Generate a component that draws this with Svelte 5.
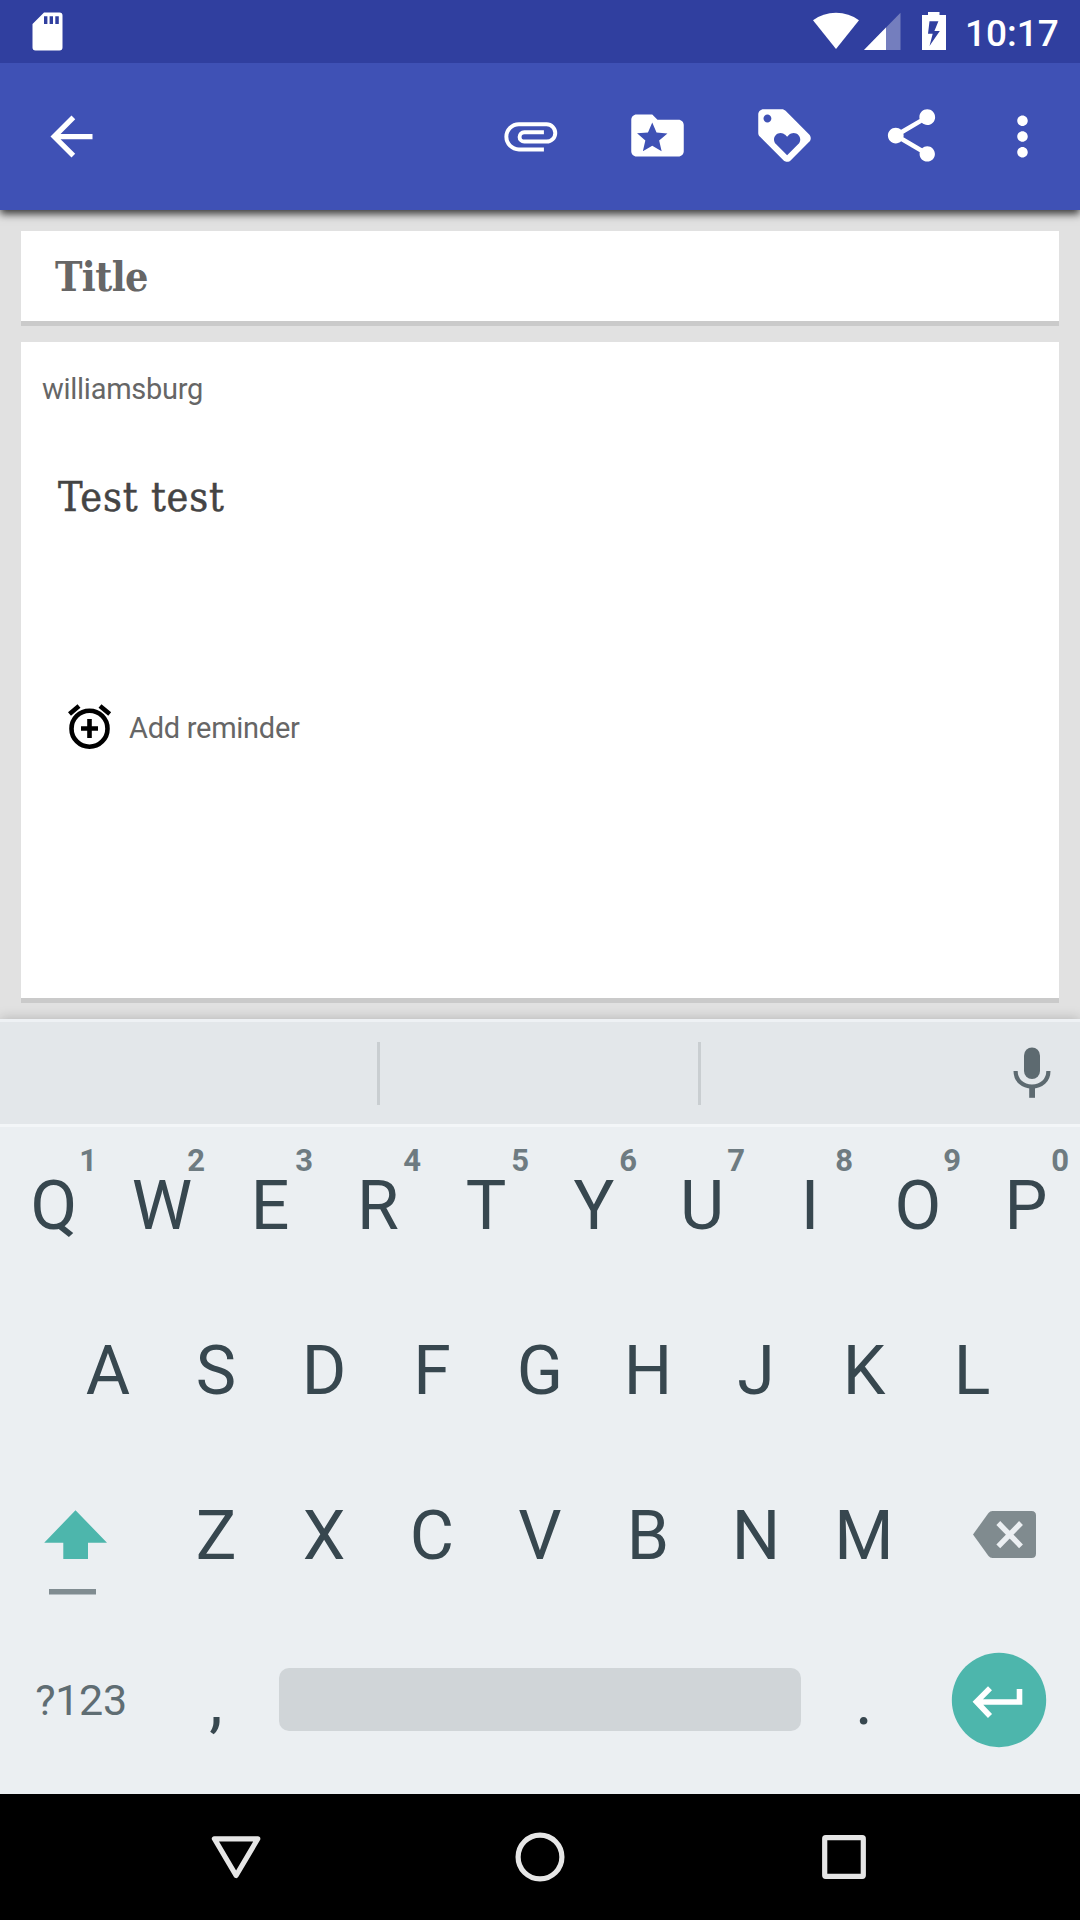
<script>
  const topRow = [...'QWERTYUIOP'].map((letter, i) => ({ letter, hint: (i + 1) % 10 }));
  const homeRow = [...'ASDFGHJKL'];
  const bottomRow = [...'ZXCVBNM'];

  const actions = [
    {
      name: 'Category',
      d: 'M20 6h-8l-2-2H4c-1.1 0-1.99.9-1.99 2L2 18c0 1.1.9 2 2 2h16c1.1 0 2-.9 2-2V8c0-1.1-.9-2-2-2zm-6.42 12L10 15.9 6.42 18l.95-4.07-3.16-2.74 4.16-.36L10 7l1.63 3.84 4.16.36-3.16 2.74.95 4.06z'
    },
    {
      name: 'Tag',
      d: 'M21.41 11.58l-9-9C12.05 2.22 11.55 2 11 2H4c-1.1 0-2 .9-2 2v7c0 .55.22 1.05.59 1.42l9 9c.36.36.86.58 1.41.58.55 0 1.05-.22 1.41-.59l7-7c.37-.36.59-.86.59-1.41 0-.55-.23-1.06-.59-1.42zM5.5 7C4.67 7 4 6.33 4 5.5S4.67 4 5.5 4 7 4.67 7 5.5 6.33 7 5.5 7zm11.77 8.27L13 19.54l-4.27-4.27C8.28 14.81 8 14.19 8 13.5c0-1.38 1.12-2.5 2.5-2.5.69 0 1.32.28 1.77.74l.73.72.73-.73c.45-.45 1.08-.73 1.77-.73 1.38 0 2.5 1.12 2.5 2.5 0 .69-.28 1.32-.73 1.77z'
    },
    {
      name: 'Share',
      d: 'M18 16.08c-.76 0-1.44.3-1.96.77L8.91 12.7c.05-.23.09-.46.09-.7s-.04-.47-.09-.7l7.05-4.11c.54.5 1.25.81 2.04.81 1.66 0 3-1.34 3-3s-1.34-3-3-3-3 1.34-3 3c0 .24.04.47.09.7L8.04 9.81C7.5 9.31 6.79 9 6 9c-1.66 0-3 1.34-3 3s1.34 3 3 3c.79 0 1.5-.31 2.04-.81l7.12 4.16c-.05.21-.08.43-.08.65 0 1.61 1.31 2.92 2.92 2.92 1.61 0 2.92-1.31 2.92-2.92s-1.31-2.92-2.92-2.92z'
    }
  ];
</script>

<div class="screen">
  <header class="status">
    <svg class="sd" width="32" height="40" viewBox="0 0 32 40">
      <path fill="#fff" fill-rule="evenodd" d="M12 1.500H27.500a3 3 0 0 1 3 3V36.500a3 3 0 0 1-3 3H3.500a3 3 0 0 1-3-3V13zM12 5.300v7.700h3.400V5.300zM17.600 5.300v7.700h3.400V5.300zM23.300 5.300v7.700h3.500V5.300z" />
    </svg>
    <svg class="indicators" width="136" height="40" viewBox="0 0 136 40">
      <path fill="#fff" d="M0 9.300Q10 1.800 23 1.800T46 9.300L23 38z" />
      <path fill="#fff" fill-opacity=".33" d="M87.500 1.800V39H51z" />
      <path fill="#fff" d="M73 16.500V39H51z" />
      <path fill="#fff" fill-rule="evenodd" d="M115 1h11.500v3H133v35h-24V4h6zM116.500 10.300l-1.500 12.500h4.700L116.500 35 126.800 20h-5.400l4-9.700z" />
    </svg>
    <span class="clock">10:17</span>
  </header>

  <nav class="toolbar">
    <svg class="icon back" viewBox="0 0 24 24"><path d="M20 11H7.83l5.59-5.59L12 4l-8 8 8 8 1.41-1.41L7.83 13H20v-2z" /></svg>
    <div class="actions">
      <svg class="icon outline" viewBox="0 0 24 24" aria-label="Attach">
        <path d="M17.110 17.300H7.590A4.795 4.795 0 0 1 7.590 7.710H18.130A3.305 3.305 0 0 1 18.130 14.320H9.620A1.780 1.780 0 0 1 9.620 10.760H17.110" />
      </svg>
      {#each actions as action}
        <svg class="icon" viewBox="0 0 24 24" aria-label={action.name}><path d={action.d} /></svg>
      {/each}
    </div>
    <svg class="icon more" viewBox="0 0 24 24"><path d="M12 8c1.1 0 2-.9 2-2s-.9-2-2-2-2 .9-2 2 .9 2 2 2zm0 2c-1.1 0-2 .9-2 2s.9 2 2 2 2-.9 2-2-.9-2-2-2zm0 6c-1.1 0-2 .9-2 2s.9 2 2 2 2-.9 2-2-.9-2-2-2z" /></svg>
  </nav>

  <main class="note">
    <section class="card title">Title</section>
    <section class="card body">
      <div class="category">williamsburg</div>
      <div class="content">Test test</div>
      <div class="reminder">
        <svg width="46" height="48" viewBox="0 0 46 48" fill="none" stroke="#000" stroke-width="4.6">
          <circle cx="22.500" cy="25.700" r="18" />
          <path d="M22.500 16V35M14 25.500H31M2.500 11L12 3M33 3L42.700 11" />
        </svg>
        <span>Add reminder</span>
      </div>
    </section>
  </main>

  <section class="keyboard">
    <div class="suggestions">
      <i></i>
      <i></i>
      <svg width="38" height="52" viewBox="0 0 38 52">
        <rect x="11" y="0.5" width="16" height="31.500" rx="8" fill="#5d6a70" />
        <path d="M2.600 24c0 9.500 7 15.500 16.400 15.500S35.400 33.500 35.400 24" fill="none" stroke="#5d6a70" stroke-width="4.200" />
        <path d="M16.200 40h5.800v10.800h-5.800z" fill="#5d6a70" />
      </svg>
    </div>
    <div class="keys">
      <div class="row">
        {#each topRow as key}
          <div class="key">{key.letter}<small>{key.hint}</small></div>
        {/each}
      </div>
      <div class="row">
        {#each homeRow as letter}<div class="key">{letter}</div>{/each}
      </div>
      <div class="row">
        <svg class="wide" viewBox="0 0 162 165">
          <path fill="#4db6ac" d="M75.500 53.200L107 85.800H88V102H63.300V85.800H44.200z" />
          <path fill="#808c91" d="M49 132h47v5.600H49z" />
        </svg>
        {#each bottomRow as letter}<div class="key">{letter}</div>{/each}
        <svg class="wide" viewBox="0 0 162 165">
          <path fill="#808b8f" d="M55 77.500L70.500 56Q72 54 74.500 54H113.500q4.500 0 4.500 4.500V96.500q0 4.500-4.500 4.500H74.500Q72 101 70.500 99z" />
          <path stroke="#ebeff2" stroke-width="5.400" d="M80.300 66L103 89.300M103 66L80.300 89.300" />
        </svg>
      </div>
      <div class="row">
        <div class="key wide symbols">?123</div>
        <div class="key">,</div>
        <div class="space"></div>
        <div class="key">.</div>
        <svg class="wide" viewBox="0 0 162 165">
          <circle cx="81" cy="78" r="47.200" fill="#4db6ac" />
          <path fill="none" stroke="#fff" stroke-width="5.600" d="M101.500 67V80H60M72 66.300L58.500 79.800L72 94" />
        </svg>
      </div>
    </div>
  </section>

  <footer class="navbar">
    <svg width="1080" height="126" viewBox="0 0 1080 126" fill="none" stroke="#e6e6e6" stroke-width="5.200" stroke-linejoin="round">
      <path d="M214.400 44.800H257.800L236.100 81.500z" />
      <circle cx="540" cy="63" r="21.900" />
      <rect x="824.700" y="43.700" width="38.600" height="38.600" rx="1" />
    </svg>
  </footer>
</div>

<style>
  :global(body) {
    margin: 0;
    background: #e1e1e1;
  }

  .screen {
    width: 1080px;
    height: 1920px;
    display: flex;
    flex-direction: column;
    overflow: hidden;
    background: #e1e1e1;
    font-family: Roboto, sans-serif;
  }

  svg {
    display: block;
    flex: none;
  }

  .status {
    position: relative;
    z-index: 1;
    height: 63px;
    flex: none;
    display: flex;
    align-items: flex-start;
    background: #303f9f;
    color: #fff;
  }

  .sd {
    margin: 11px auto 0 32px;
  }

  .indicators {
    margin-top: 11px;
  }

  .clock {
    width: 131px;
    padding-left: 16px;
    box-sizing: border-box;
    font-size: 37px;
    font-weight: 500;
    line-height: 67px;
  }

  .toolbar {
    height: 147px;
    flex: none;
    box-sizing: border-box;
    padding: 0 26px 2px 40px;
    display: flex;
    align-items: center;
    background: #3f51b5;
    box-shadow: 0 4px 8px 0 rgba(0, 0, 0, 0.75);
  }

  .icon {
    width: 63px;
    height: 63px;
    fill: #fff;
  }

  .outline {
    fill: none;
    stroke: #fff;
    stroke-width: 1.5;
  }

  .actions {
    display: flex;
    gap: 64px;
    margin-left: auto;
  }

  .back {
    margin-top: 1px;
  }

  .more {
    margin: 1px 0 0 48px;
  }

  .note {
    flex: 1;
    display: flex;
    flex-direction: column;
    gap: 16px;
    padding: 21px 21px 16px;
  }

  .card {
    box-sizing: border-box;
    background: #fff;
    border-bottom: 5px solid #cacaca;
    color: #666;
  }

  .title {
    height: 95px;
    padding-left: 34px;
    font: bold 41px/92px 'Roboto Slab', 'DejaVu Serif Condensed', 'DejaVu Serif', serif;
    letter-spacing: -0.6px;
  }

  .body {
    flex: 1;
    padding: 25px 21px 0;
    font-size: 29px;
    letter-spacing: -0.27px;
  }

  .category {
    line-height: 44px;
  }

  .content {
    height: 292px;
    padding: 59px 0 0 16px;
    box-sizing: border-box;
    font: 41px/54px 'Roboto Slab', 'DejaVu Serif Condensed', 'DejaVu Serif', serif;
    letter-spacing: 0.85px;
    color: #444;
    -webkit-text-stroke: 0.5px #444;
  }

  .reminder {
    display: flex;
    align-items: center;
    gap: 16px;
    padding-left: 25px;
  }

  .reminder span {
    padding-top: 2px;
  }

  .keyboard {
    height: 775px;
    flex: none;
    background: #ebeff2;
    box-shadow: 0 0 12px rgba(0, 0, 0, 0.22);
  }

  .suggestions {
    height: 108px;
    box-sizing: border-box;
    display: flex;
    align-items: center;
    background: #e3e7ea;
    border-top: 3px solid #eef1f4;
    border-bottom: 3px solid #f3f6f8;
  }

  .suggestions i {
    width: 3px;
    height: 63px;
    background: #c9ced1;
    margin-left: 377px;
  }

  .suggestions i + i {
    margin-left: 318px;
  }

  .suggestions svg {
    margin-left: 312px;
  }

  .row {
    height: 165px;
    display: flex;
    justify-content: center;
  }

  .key {
    position: relative;
    width: 108px;
    text-align: center;
    font-size: 68px;
    line-height: 158px;
    color: #37474f;
  }

  .key small {
    position: absolute;
    top: 16px;
    right: 11px;
    font-size: 31px;
    font-weight: 700;
    line-height: 36px;
    color: #6e7b81;
  }

  .wide {
    width: 162px;
    height: 165px;
  }

  .symbols {
    font-size: 43px;
    line-height: 156px;
    letter-spacing: -0.3px;
    color: #5f6d73;
  }

  .space {
    width: 522px;
    height: 63px;
    margin: 46px 9px 0;
    border-radius: 10px;
    background: #d0d5d8;
  }

  .navbar {
    height: 126px;
    flex: none;
    background: #000;
  }
</style>
